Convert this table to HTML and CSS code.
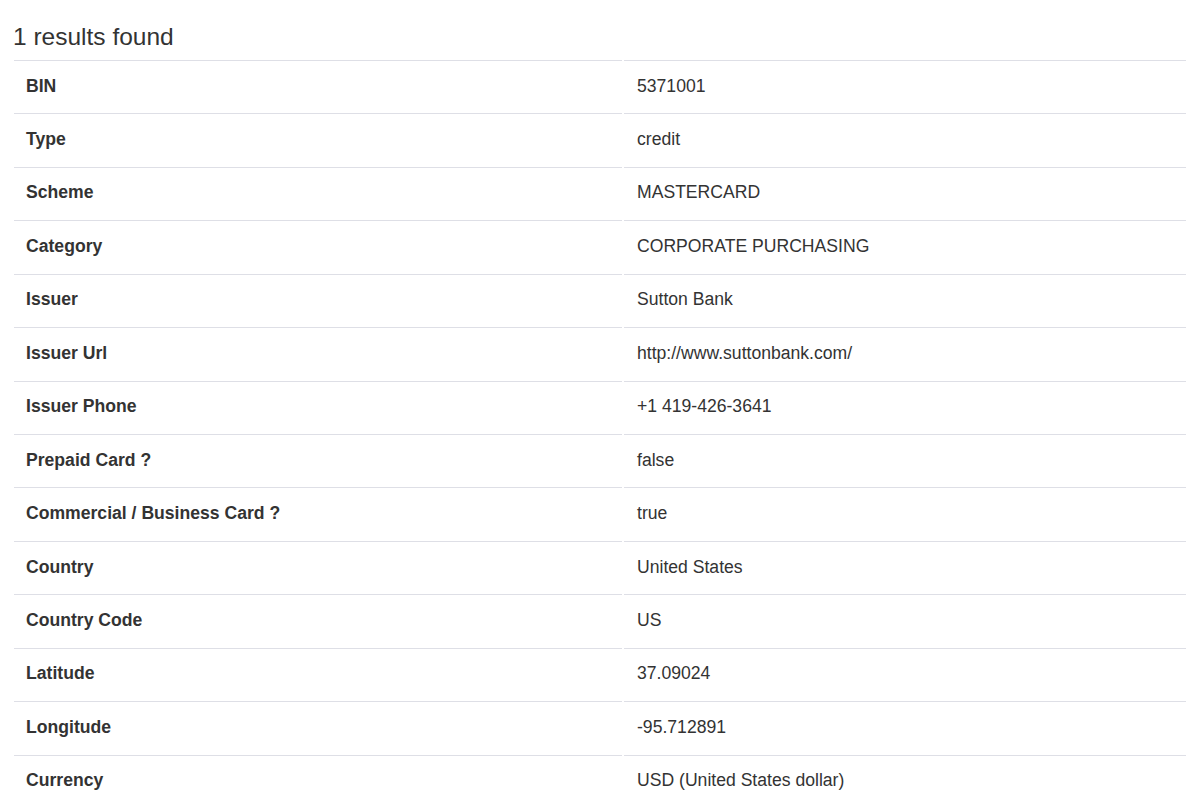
FILE: index.html
```html
<!DOCTYPE html>
<html>
<head>
<meta charset="utf-8">
<link rel="stylesheet" href="styles.css">
</head>
<body>
<div class="page">
  <h3 class="title">1 results found</h3>
  <table class="results">
    <tbody>
      <tr><th>BIN</th><td>5371001</td></tr>
      <tr><th>Type</th><td>credit</td></tr>
      <tr><th>Scheme</th><td>MASTERCARD</td></tr>
      <tr><th>Category</th><td>CORPORATE PURCHASING</td></tr>
      <tr><th>Issuer</th><td>Sutton Bank</td></tr>
      <tr><th>Issuer Url</th><td>http://www.suttonbank.com/</td></tr>
      <tr><th>Issuer Phone</th><td>+1 419-426-3641</td></tr>
      <tr><th>Prepaid Card ?</th><td>false</td></tr>
      <tr><th>Commercial / Business Card ?</th><td>true</td></tr>
      <tr><th>Country</th><td>United States</td></tr>
      <tr><th>Country Code</th><td>US</td></tr>
      <tr><th>Latitude</th><td>37.09024</td></tr>
      <tr><th>Longitude</th><td>-95.712891</td></tr>
      <tr><th>Currency</th><td>USD (United States dollar)</td></tr>
    </tbody>
  </table>
</div>
</body>
</html>
```

FILE: styles.css
```css
html, body {
  margin: 0;
  padding: 0;
  background: #ffffff;
}

body {
  font-family: "Liberation Sans", Arial, sans-serif;
  font-size: 17.6px;
  line-height: 1.42857;
  color: #333333;
}

.page {
  padding: 0 7px 0 10px;
}

.title {
  font-size: 24.5px;
  font-weight: 400;
  line-height: 1.1;
  margin: 24px 0 7px 3px;
  color: #333333;
}

.results {
  width: 1176px;
  margin-left: 2px;
  border-collapse: separate;
  border-spacing: 2px;
}

.results th,
.results td {
  text-align: left;
  vertical-align: top;
  padding: 12.66px 12px;
  border-top: 1px solid #dedfe6;
}

.results td {
  padding-left: 13px;
}

.results th {
  width: 584px;
  font-weight: 700;
}
```
